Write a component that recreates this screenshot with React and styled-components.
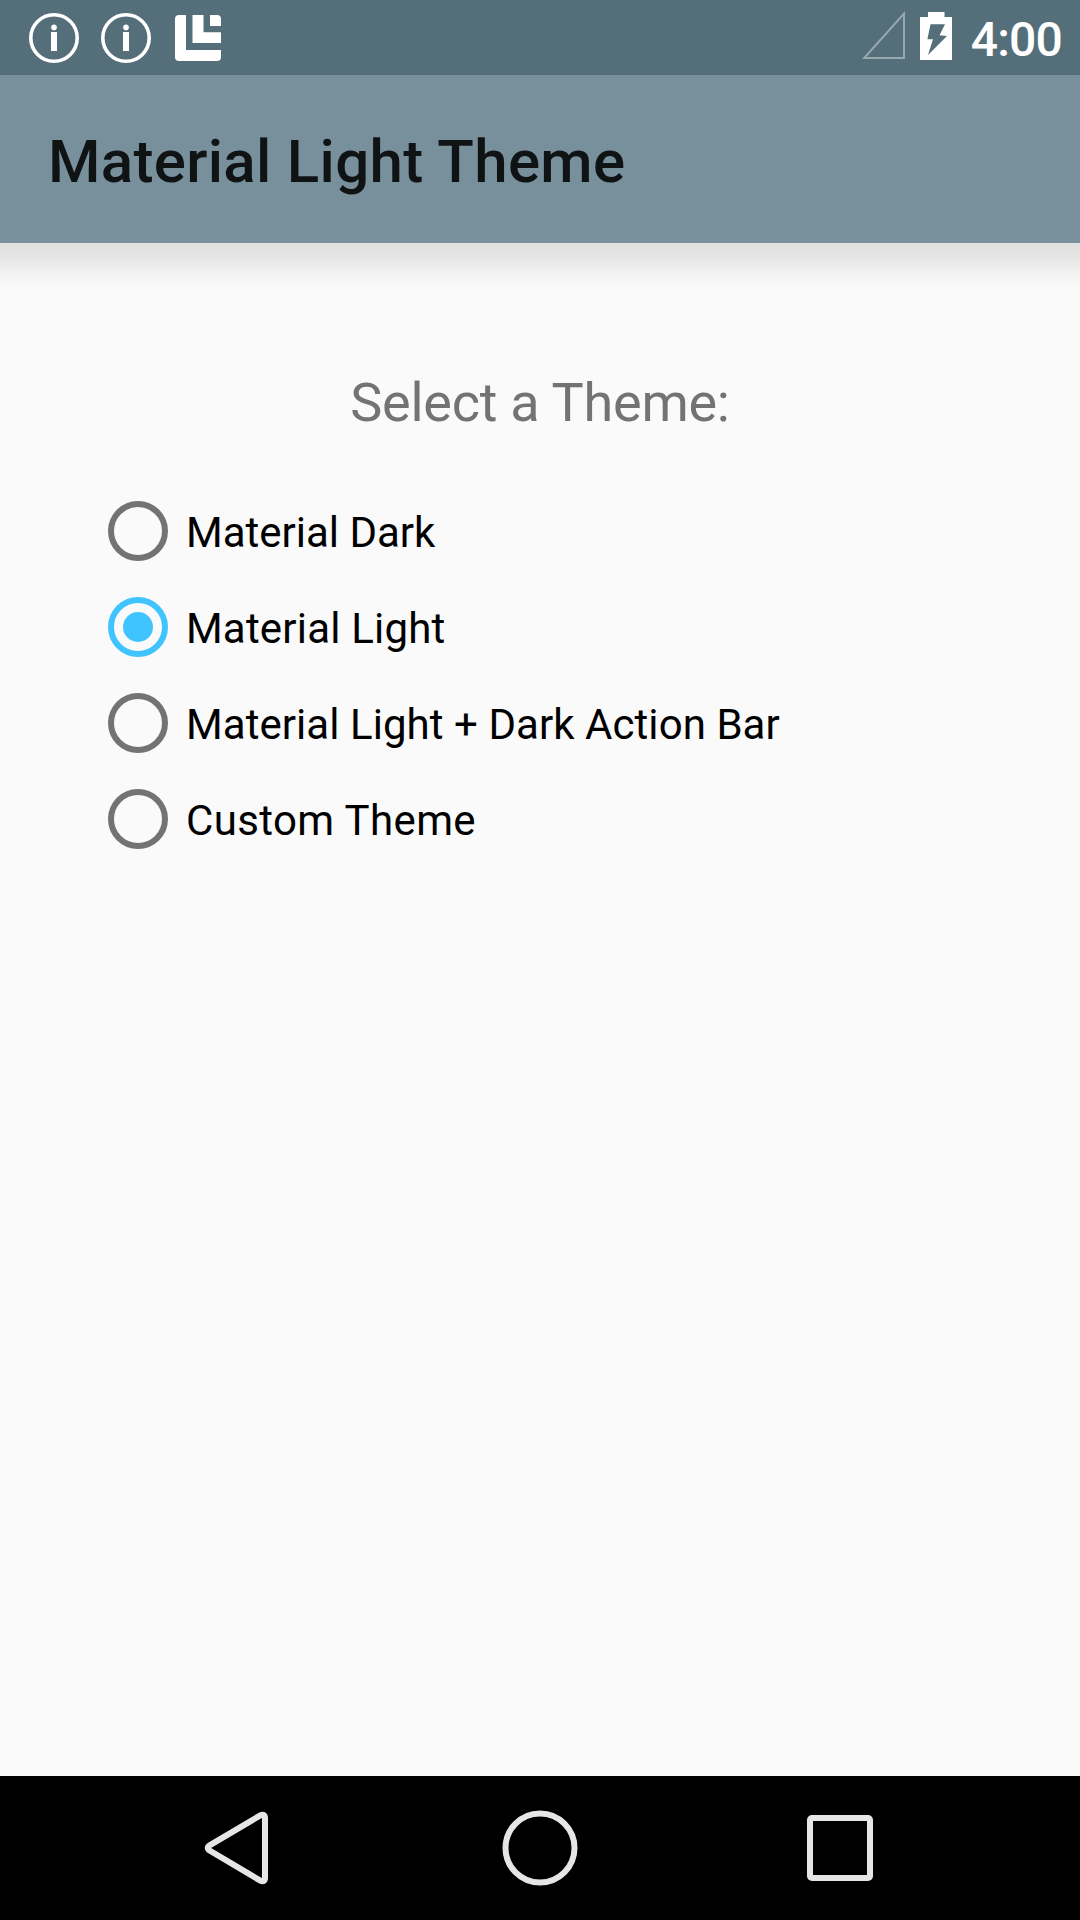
import React, { useState } from 'react';
import styled, { createGlobalStyle } from 'styled-components';

const GlobalStyle = createGlobalStyle`
  * { box-sizing: border-box; }
  body { margin: 0; background: #fafafa; font-family: Roboto, sans-serif; }
`;

const Screen = styled.div`
  display: flex;
  flex-direction: column;
  width: 1080px;
  height: 1920px;
  background: #fafafa;
  overflow: hidden;
`;

const StatusBar = styled.header`
  display: flex;
  justify-content: space-between;
  height: 75px;
  flex: none;
  background: #546e7a;
`;

const StatusIcons = styled.div`
  display: flex;
  padding-left: 18px;
`;

const StatusTray = styled.div`
  display: flex;
  padding-right: 18px;
`;

const Glyph = styled.svg`
  display: block;
  flex: none;
  width: ${(p) => p.$w}px;
  height: ${(p) => p.$h}px;
`;

const Clock = styled.span`
  width: 110px;
  padding-top: 4px;
  color: #fff;
  font-size: 48px;
  font-weight: 500;
  letter-spacing: -0.8px;
  line-height: 72px;
  text-align: right;
`;

const AppBar = styled.div`
  display: flex;
  align-items: center;
  flex: none;
  height: 168px;
  padding: 5px 48px 0;
  background: #78909c;
`;

const Title = styled.h1`
  margin: 0;
  color: rgba(0, 0, 0, 0.87);
  font-size: 60px;
  font-weight: 500;
  letter-spacing: 0.32px;
  line-height: 72px;
  white-space: nowrap;
`;

const Content = styled.main`
  display: flex;
  flex-direction: column;
  flex: 1;
  padding: 124px 90px 0;
  background: linear-gradient(#e0e0e0 0, #e1e1e1 6px, #e5e5e5 13px, #ececec 22px, #f4f4f4 33px, #fafafa 43px);
`;

const Prompt = styled.h2`
  margin: 0 0 44px;
  color: #737373;
  font-size: 54px;
  font-weight: 400;
  letter-spacing: -0.25px;
  line-height: 72px;
  text-align: center;
`;

const Options = styled.div`
  display: flex;
  flex-direction: column;
`;

const Option = styled.div`
  display: flex;
  align-items: center;
  height: 96px;
  padding-left: 18px;
  cursor: pointer;
`;

const Ring = styled.span`
  display: flex;
  align-items: center;
  justify-content: center;
  flex: none;
  width: 60px;
  height: 60px;
  border: 6px solid ${(p) => (p.$on ? '#40c4ff' : '#737373')};
  border-radius: 50%;
`;

const Dot = styled.span`
  width: 30px;
  height: 30px;
  border-radius: 50%;
  background: #40c4ff;
`;

const OptionLabel = styled.span`
  margin-left: 18px;
  padding-top: 3px;
  color: #000;
  font-size: 42px;
  letter-spacing: ${(p) => p.$tracking}px;
  line-height: 48px;
  white-space: nowrap;
`;

const NavBar = styled.nav`
  display: flex;
  justify-content: center;
  flex: none;
  height: 144px;
  background: #000;
`;

const NavButton = styled.button`
  display: flex;
  width: 300px;
  height: 144px;
  padding: 0;
  border: 0;
  background: none;
`;

const InfoIcon = () => (
  <Glyph $w={72} $h={75} viewBox="0 0 72 75">
    <circle cx="36" cy="38" r="23.2" fill="none" stroke="#fff" strokeWidth="3.6" />
    <circle cx="36" cy="27.4" r="2.8" fill="#fff" />
    <rect x="33" y="32" width="6" height="19" fill="#fff" />
  </Glyph>
);

const BrandIcon = () => (
  <Glyph $w={72} $h={75} viewBox="0 0 72 75">
    <path
      fill="#fff"
      d="M17 15H24V50H59V57Q59 61 55 61H17Q13 61 13 57V19Q13 15 17 15ZM30.5 15H41.5V32.3H59V43H30.5ZM48 15H55Q59 15 59 19V26H48Z"
    />
  </Glyph>
);

const SignalIcon = () => (
  <Glyph $w={58} $h={75} viewBox="0 0 58 75">
    <path d="M16.2 58H56V13.6Z" fill="none" stroke="#fff" strokeOpacity="0.4" strokeWidth="2" />
  </Glyph>
);

const BatteryIcon = () => (
  <Glyph $w={46} $h={75} viewBox="2 0 46 75">
    <path
      fill="#fff"
      fillRule="evenodd"
      d="M24 12H40.5V17H48V60H16V17H24ZM26.5 24.3L23.4 39.3H29L24 54.9L43 36L35.5 35.3L41 24.3Z"
    />
  </Glyph>
);

const themes = [
  { name: 'Material Dark', tracking: 0 },
  { name: 'Material Light', tracking: 0.2 },
  { name: 'Material Light + Dark Action Bar', tracking: 0.06 },
  { name: 'Custom Theme', tracking: 0.38 },
];

export default function App() {
  const [selected, setSelected] = useState(1);
  return (
    <>
      <GlobalStyle />
      <Screen>
        <StatusBar>
          <StatusIcons>
            <InfoIcon />
            <InfoIcon />
            <BrandIcon />
          </StatusIcons>
          <StatusTray>
            <SignalIcon />
            <BatteryIcon />
            <Clock>4:00</Clock>
          </StatusTray>
        </StatusBar>
        <AppBar>
          <Title>Material Light Theme</Title>
        </AppBar>
        <Content>
          <Prompt>Select a Theme:</Prompt>
          <Options role="radiogroup">
            {themes.map(({ name, tracking }, i) => (
              <Option key={name} role="radio" aria-checked={i === selected} onClick={() => setSelected(i)}>
                <Ring $on={i === selected}>{i === selected && <Dot />}</Ring>
                <OptionLabel $tracking={tracking}>{name}</OptionLabel>
              </Option>
            ))}
          </Options>
        </Content>
        <NavBar>
          <NavButton aria-label="Back">
            <Glyph $w={300} $h={144} viewBox="90 0 300 144">
              <path
                d="M260.4 39.3L210 69.2Q205.5 72 210 74.8L260.4 104.7Q265 106.5 265 102V42Q265 37.5 260.4 39.3Z"
                fill="none"
                stroke="#e6e6e6"
                strokeWidth="6"
                strokeLinejoin="round"
              />
            </Glyph>
          </NavButton>
          <NavButton aria-label="Home">
            <Glyph $w={300} $h={144} viewBox="390 0 300 144">
              <circle cx="540" cy="72" r="34.5" fill="none" stroke="#e6e6e6" strokeWidth="6" />
            </Glyph>
          </NavButton>
          <NavButton aria-label="Recents">
            <Glyph $w={300} $h={144} viewBox="690 0 300 144">
              <rect x="810" y="42" width="60" height="60" rx="2" fill="none" stroke="#e6e6e6" strokeWidth="6" />
            </Glyph>
          </NavButton>
        </NavBar>
      </Screen>
    </>
  );
}
